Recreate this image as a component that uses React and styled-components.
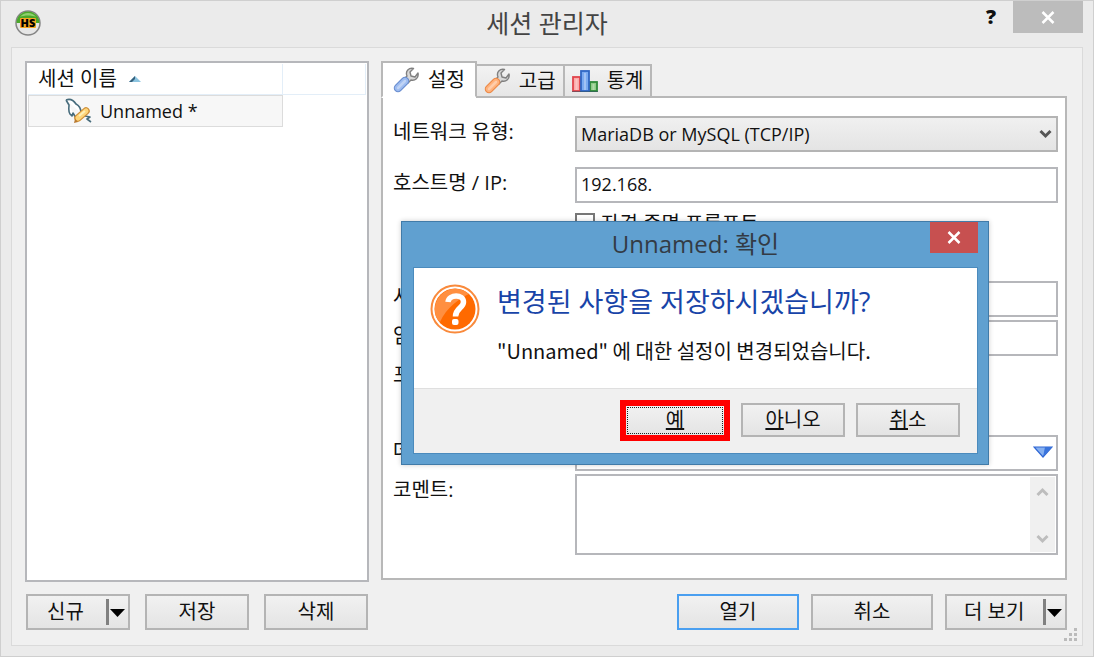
import React from "react";
import styled, { createGlobalStyle } from "styled-components";

const GlobalStyle = createGlobalStyle`
  * {
    box-sizing: border-box;
  }
  body {
    margin: 0;
    font-family: "Open Sans", "Noto Sans CJK KR", sans-serif;
    font-size: 20px;
    color: #111;
  }
  button, input, select, textarea {
    font: inherit;
    color: inherit;
    border-radius: 0;
    margin: 0;
    padding: 0;
  }
`;

const Window = styled.main`
  position: relative;
  display: flex;
  flex-direction: column;
  min-height: 100vh;
  padding: 0 10px 10px;
  background: #ebebeb;
  border: 1px solid #cfcfcf;
`;

const TitleBar = styled.header`
  display: grid;
  grid-template-columns: 1fr auto 1fr;
  height: 46px;
`;

const AppIcon = styled.svg`
  width: 26px;
  height: 26px;
  margin: 9px 0 0 4px;
`;

const Title = styled.h1`
  margin: 0;
  font-size: 25px;
  font-weight: 400;
  line-height: 44px;
  color: #444;
`;

const TitleActions = styled.div`
  display: flex;
  justify-content: flex-end;
  align-items: flex-start;
  gap: 8px;
`;

const HelpButton = styled.button`
  width: 28px;
  height: 32px;
  border: 0;
  background: none;
  font-size: 20px;
  font-weight: 800;
  line-height: 32px;
`;

const CloseButton = styled.button`
  display: flex;
  align-items: center;
  justify-content: center;
  width: ${({ $width }) => $width}px;
  height: ${({ $height }) => $height}px;
  border: 0;
  background: ${({ $color }) => $color};
`;

const Client = styled.div`
  flex: 1;
  display: flex;
  flex-direction: column;
  gap: 12px;
  padding: 13px 15px 15px 13px;
  background: #f0f0f0;
  border: 1px solid #dadada;
`;

const Content = styled.div`
  flex: 1;
  display: flex;
  gap: 12px;
`;

const SessionList = styled.section`
  flex: 0 0 344px;
  padding: 1px;
  background: #fff;
  border: 2px solid #b6b7bb;
`;

const SessionTable = styled.table`
  width: 100%;
  border-collapse: separate;
  border-spacing: 0;
`;

const HeadCell = styled.th`
  width: ${({ $width }) => $width};
  height: 31px;
  padding: 0 10px;
  font-weight: 400;
  line-height: 28px;
  text-align: left;
  border-right: 1px solid #e3eef8;
  border-bottom: 1px solid #e3eef8;

  svg {
    margin-left: 12px;
    vertical-align: 4px;
  }
`;

const SessionCell = styled.td`
  height: 32px;
  padding: 0 0 0 36px;
  background: #f7f7f7;
  border: 1px solid #dcdcdc;
`;

const SessionName = styled.span`
  display: flex;
  align-items: center;
  gap: 8px;
  font-size: 18px;
  line-height: 28px;
`;

const Settings = styled.section`
  flex: 1;
  display: flex;
  flex-direction: column;
  min-width: 0;
  padding-bottom: 2px;
`;

const Tabs = styled.div`
  display: flex;
  align-items: flex-end;
  height: 37px;
  margin-bottom: -2px;
`;

const Tab = styled.button`
  position: relative;
  display: flex;
  align-items: center;
  gap: 9px;
  height: ${({ $active }) => ($active ? 37 : 34)}px;
  padding: 0 ${({ $active }) => ($active ? 10 : 7)}px;
  line-height: 28px;
  background: ${({ $active }) => ($active ? "#fff" : "linear-gradient(#f2f2f2, #e6e6e6)")};
  border: 2px solid #b8b8b8;
  border-bottom-color: ${({ $active }) => ($active ? "#fff" : "#b8b8b8")};

  & + & {
    margin-left: -1px;
    border-left-width: 1px;
  }
`;

const Panel = styled.form`
  flex: 1;
  padding: 18px 7px 23px 10px;
  background: #fff;
  border: 2px solid #b8b8b8;
`;

const Section = styled.div`
  display: flex;
  flex-direction: column;
  gap: 3px;

  & + & {
    margin-top: 40px;
  }
`;

const Row = styled.div`
  display: grid;
  grid-template-columns: 182px 1fr;
  align-items: start;
  margin-bottom: ${({ $space }) => $space || 0}px;
`;

const Label = styled.label`
  line-height: 32px;
  white-space: nowrap;
`;

const SelectBox = styled.div`
  position: relative;

  svg {
    position: absolute;
    right: 6px;
    top: 13px;
    pointer-events: none;
  }
`;

const Select = styled.select`
  appearance: none;
  width: 100%;
  height: 36px;
  padding: 0 4px;
  font-size: 18px;
  background: linear-gradient(#f0f0f0, #e4e4e4);
  border: 2px solid #b4b4b4;
`;

const Input = styled.input`
  width: ${({ $width }) => $width || "100%"};
  height: 36px;
  padding: 0 4px 2px;
  font-size: 18px;
  background: #fff;
  border: 2px solid #b6b7bb;
`;

const CheckLabel = styled.label`
  grid-column: 2;
  display: flex;
  align-items: center;
  gap: 6px;
  height: 35px;
  padding-bottom: 2px;
`;

const Checkbox = styled.input`
  appearance: none;
  width: 20px;
  height: 20px;
  background: #fff;
  border: 2px solid #777;
`;

const DatabaseBox = styled(SelectBox)`
  svg {
    right: 5px;
    top: 11px;
  }
`;

const CommentBox = styled.div`
  display: flex;
  height: 81px;
  padding: 1px;
  background: #fff;
  border: 2px solid #b6b7bb;
`;

const Comment = styled.textarea`
  flex: 1;
  min-width: 0;
  border: 0;
  resize: none;
  overflow: hidden;
`;

const Scrollbar = styled.div`
  display: flex;
  flex-direction: column;
  align-items: center;
  justify-content: space-between;
  width: 25px;
  padding: 9px 0 7px;
  background: #f0f0f0;
`;

const Footer = styled.footer`
  display: flex;
  justify-content: space-between;
  padding-left: 1px;
`;

const ButtonGroup = styled.div`
  display: flex;
  gap: ${({ $gap }) => $gap}px;
`;

const Button = styled.button`
  display: flex;
  align-items: center;
  justify-content: center;
  width: ${({ $width }) => $width || 104}px;
  height: ${({ $height }) => $height || 36}px;
  line-height: 28px;
  background: linear-gradient(#f1f1f1, #e4e4e4);
  border: 2px solid ${({ $primary }) => ($primary ? "#4a9ff0" : "#b4b4b4")};
`;

const SplitButton = styled(Button)`
  justify-content: space-between;
  padding: 0 2px 0 ${({ $width }) => ($width ? 17 : 19)}px;
`;

const SplitArrow = styled.svg`
  width: 20px;
  height: 28px;
`;

const Grip = styled.svg`
  position: absolute;
  right: 15px;
  bottom: 14px;
  width: 14px;
  height: 14px;
`;

const Dialog = styled.section`
  position: absolute;
  left: 400px;
  top: 220px;
  width: 588px;
  padding: 0 10px 10px 11px;
  background: #60a0d0;
  border: 1px solid #417ba8;
  box-shadow: 0 0 5px rgba(0, 0, 0, 0.2);
`;

const DialogBar = styled.header`
  display: grid;
  grid-template-columns: 48px 1fr 48px;
  height: 45px;
`;

const DialogTitle = styled.h2`
  grid-column: 2;
  margin: 0;
  font-size: 24px;
  font-weight: 400;
  line-height: 44px;
  text-align: center;
  color: #333b45;
`;

const DialogBody = styled.div`
  background: #fff;
  border: 1px solid #4b8bbd;
`;

const Message = styled.div`
  display: flex;
  gap: 17px;
  height: 120px;
  padding: 16px;
`;

const MessageText = styled.div`
  display: flex;
  flex-direction: column;
  gap: 17px;
`;

const Question = styled.h3`
  margin: 0;
  font-size: 27px;
  font-weight: 400;
  line-height: 36px;
  color: #1844a8;
`;

const Detail = styled.p`
  margin: 0;
  font-family: "Noto Sans CJK KR", sans-serif;
  font-size: 20px;
  line-height: 28px;
`;

const DialogFooter = styled.footer`
  display: flex;
  align-items: center;
  justify-content: flex-end;
  gap: 11px;
  height: 65px;
  padding: 0 17px 2px 0;
  background: #f0f0f0;
  border-top: 1px solid #dfdfdf;
`;

const YesButton = styled(Button)`
  border: 6px solid #f00;
  outline: 1px dotted #222;
  outline-offset: -8px;
`;

function Cross() {
  return (
    <svg width="14" height="13" viewBox="0 0 14 13">
      <path d="M1.5 1l11 11M12.500 1l-11 11" stroke="#fff" strokeWidth="2.500" />
    </svg>
  );
}

function Chevron({ up, color = "#555" }) {
  return (
    <svg width="13" height="11" viewBox="0 0 13 11">
      <path d={up ? "M1.500 9l5-5 5 5" : "M1.500 2l5 5 5-5"} fill="none" stroke={color} strokeWidth="3" />
    </svg>
  );
}

function Wrench({ fill, stroke }) {
  return (
    <svg width="26" height="26" viewBox="0 0 26 26">
      <path
        d="M11 12l3-3c-2-5 2-8.500 6.500-7.500l-3.500 3.500 1 4 4 1 3-4c1 5-3 8-7 7l-3 3z"
        fill="#d8d8d8"
        stroke="#808080"
        strokeWidth="1.400"
        strokeLinejoin="round"
      />
      <path d="M5 21l7-7" stroke={stroke} strokeWidth="8.500" strokeLinecap="round" />
      <path d="M5 21l7-7" stroke={fill} strokeWidth="6.200" strokeLinecap="round" />
      <path d="M5 21l7-7" stroke="#fff" strokeOpacity=".35" strokeWidth="2.500" strokeLinecap="round" />
    </svg>
  );
}

function ChartIcon() {
  return (
    <svg width="26" height="24" viewBox="0 0 26 24">
      <rect x="1" y="8" width="7" height="14" fill="#fbaaaa" stroke="#e0444c" strokeWidth="1.800" />
      <rect x="18" y="13" width="7" height="9" fill="#8ecb86" stroke="#2f8a3a" strokeWidth="1.800" />
      <rect x="9" y="2" width="8" height="20" fill="#7aaaf0" stroke="#2f66c4" strokeWidth="1.800" />
      <path d="M4.500 10v11M13 4v17M21.500 15v6" stroke="#fff" strokeOpacity=".3" strokeWidth="2" />
      <path d="M0 22.500h26" stroke="#245" strokeOpacity=".5" />
    </svg>
  );
}

function SessionIcon() {
  return (
    <svg width="27" height="26" viewBox="0 0 27 26">
      <path
        d="M1 2c5-2 8 1 10 4 4 2 5 5 5 9M1 2l3 5c0 3-1 6 1 9l2 2 1-3 3 5M20 18l5 1-3 2 4 3"
        fill="#fff"
        stroke="#476c7c"
        strokeWidth="1.600"
        strokeLinejoin="round"
      />
      <path d="M13 20l8-7" stroke="#cf8f38" strokeWidth="7.500" strokeLinecap="round" />
      <path d="M13 20l8-7" stroke="#ffd67a" strokeWidth="5" strokeLinecap="round" />
      <path d="M14 18l6-5" stroke="#fff0b8" strokeWidth="2" />
      <path d="M9 25l1-4 3 3z" fill="#b87a30" />
    </svg>
  );
}

function QuestionIcon() {
  return (
    <svg width="50" height="50" viewBox="0 0 50 50">
      <circle cx="25" cy="25" r="23.500" fill="#fff" stroke="#f98a3c" strokeWidth="2" />
      <circle cx="25" cy="25" r="20.500" fill="#ff6a00" />
      <path d="M5 28a20.500 20.500 0 0 1 34-18C30 14 16 24 10 38c-3-3-5-6-5-10z" fill="#ff8f40" />
      <path
        d="M18 18c1-8 15.500-8 15.500 0 0 6-8 6-8 14.500"
        fill="none"
        stroke="#fff"
        strokeWidth="5.500"
      />
      <rect x="22" y="35" width="6.500" height="6" rx="2" fill="#fff" />
    </svg>
  );
}

function DropArrow() {
  return (
    <SplitArrow viewBox="0 0 20 28">
      <path d="M1.500 1v26" stroke="#808080" strokeWidth="3" />
      <path d="M4 11h15l-7.500 8z" fill="#000" />
    </SplitArrow>
  );
}

function ConfirmDialog() {
  return (
    <Dialog role="dialog" aria-labelledby="dialog-title">
      <DialogBar>
        <DialogTitle id="dialog-title">Unnamed: 확인</DialogTitle>
        <CloseButton aria-label="닫기" $width={48} $height={31} $color="#c75050">
          <Cross />
        </CloseButton>
      </DialogBar>
      <DialogBody>
        <Message>
          <QuestionIcon />
          <MessageText>
            <Question>변경된 사항을 저장하시겠습니까?</Question>
            <Detail>"Unnamed" 에 대한 설정이 변경되었습니다.</Detail>
          </MessageText>
        </Message>
        <DialogFooter>
          <YesButton $width={110} $height={41}><u>예</u></YesButton>
          <Button $height={34}><u>아</u>니오</Button>
          <Button $height={34}><u>취</u>소</Button>
        </DialogFooter>
      </DialogBody>
    </Dialog>
  );
}

function SettingsForm() {
  return (
    <Panel>
      <Section>
        <Row $space={12}>
          <Label htmlFor="network">네트워크 유형:</Label>
          <SelectBox>
            <Select id="network">
              <option>MariaDB or MySQL (TCP/IP)</option>
            </Select>
            <Chevron />
          </SelectBox>
        </Row>
        <Row>
          <Label htmlFor="host">호스트명 / IP:</Label>
          <Input id="host" defaultValue="192.168." />
        </Row>
        <Row>
          <CheckLabel>
            <Checkbox type="checkbox" />
            자격 증명 프롬프트
          </CheckLabel>
        </Row>
      </Section>
      <Section>
        <Row>
          <Label htmlFor="user">사용자:</Label>
          <Input id="user" />
        </Row>
        <Row>
          <Label htmlFor="password">암호:</Label>
          <Input id="password" type="password" />
        </Row>
        <Row>
          <Label htmlFor="port">포트:</Label>
          <Input id="port" $width="120px" />
        </Row>
      </Section>
      <Section>
        <Row>
          <Label htmlFor="database">데이터베이스:</Label>
          <DatabaseBox>
            <Input id="database" />
            <svg width="20" height="12" viewBox="0 0 20 12">
              <path d="M1 1h18l-9 10z" fill="#86b0f0" stroke="#2f66d4" strokeWidth="1.200" />
              <path d="M10 11l9-10h-7z" fill="#3a74dc" />
            </svg>
          </DatabaseBox>
        </Row>
        <Row>
          <Label htmlFor="comment">코멘트:</Label>
          <CommentBox>
            <Comment id="comment" />
            <Scrollbar>
              <Chevron up color="#bdbdbd" />
              <Chevron color="#bdbdbd" />
            </Scrollbar>
          </CommentBox>
        </Row>
      </Section>
    </Panel>
  );
}

function App() {
  return (
    <Window>
      <GlobalStyle />
      <TitleBar>
        <AppIcon viewBox="0 0 26 26">
          <circle cx="13" cy="13" r="12" fill="#e6e6e6" stroke="#858585" strokeWidth="1.500" />
          <path d="M1.500 13a11.500 11.500 0 0 1 23 0z" fill="#4aa82a" />
          <path d="M5 7a10 10 0 0 1 16 0c-4-2-12-2-16 0z" fill="#8fd070" />
          <rect x="5" y="8" width="16" height="10" rx="1" fill="#f5a623" />
          <text x="13" y="17" textAnchor="middle" fontSize="11" fontWeight="800">HS</text>
        </AppIcon>
        <Title>세션 관리자</Title>
        <TitleActions>
          <HelpButton>?</HelpButton>
          <CloseButton aria-label="닫기" $width={70} $height={32} $color="#bcbcbc">
            <Cross />
          </CloseButton>
        </TitleActions>
      </TitleBar>
      <Client>
        <Content>
          <SessionList>
            <SessionTable>
              <thead>
                <tr>
                  <HeadCell $width="255px">
                    세션 이름
                    <svg width="12" height="6" viewBox="0 0 12 6">
                      <path d="M0 6l6-6 6 6z" fill="#8cc4e0" />
                      <path d="M0 6l6-6v3L3 6z" fill="#35607c" />
                    </svg>
                  </HeadCell>
                  <HeadCell />
                </tr>
              </thead>
              <tbody>
                <tr>
                  <SessionCell>
                    <SessionName>
                      <SessionIcon />
                      Unnamed *
                    </SessionName>
                  </SessionCell>
                </tr>
              </tbody>
            </SessionTable>
          </SessionList>
          <Settings>
            <Tabs>
              <Tab $active><Wrench fill="#9dbcf0" stroke="#6a8ed0" />설정</Tab>
              <Tab><Wrench fill="#ffb27c" stroke="#ec8a48" />고급</Tab>
              <Tab><ChartIcon />통계</Tab>
            </Tabs>
            <SettingsForm />
          </Settings>
        </Content>
        <Footer>
          <ButtonGroup $gap={15}>
            <SplitButton>신규<DropArrow /></SplitButton>
            <Button>저장</Button>
            <Button>삭제</Button>
          </ButtonGroup>
          <ButtonGroup $gap={12}>
            <Button $width={122} $primary>열기</Button>
            <Button $width={122}>취소</Button>
            <SplitButton $width={122}>더 보기<DropArrow /></SplitButton>
          </ButtonGroup>
        </Footer>
      </Client>
      <Grip viewBox="0 0 14 14" fill="#bbb">
        <path d="M10 0h3v3h-3zM5 5h3v3h-3zM10 5h3v3h-3zM0 10h3v3h-3zM5 10h3v3h-3zM10 10h3v3h-3z" />
      </Grip>
      <ConfirmDialog />
    </Window>
  );
}

export default App;
